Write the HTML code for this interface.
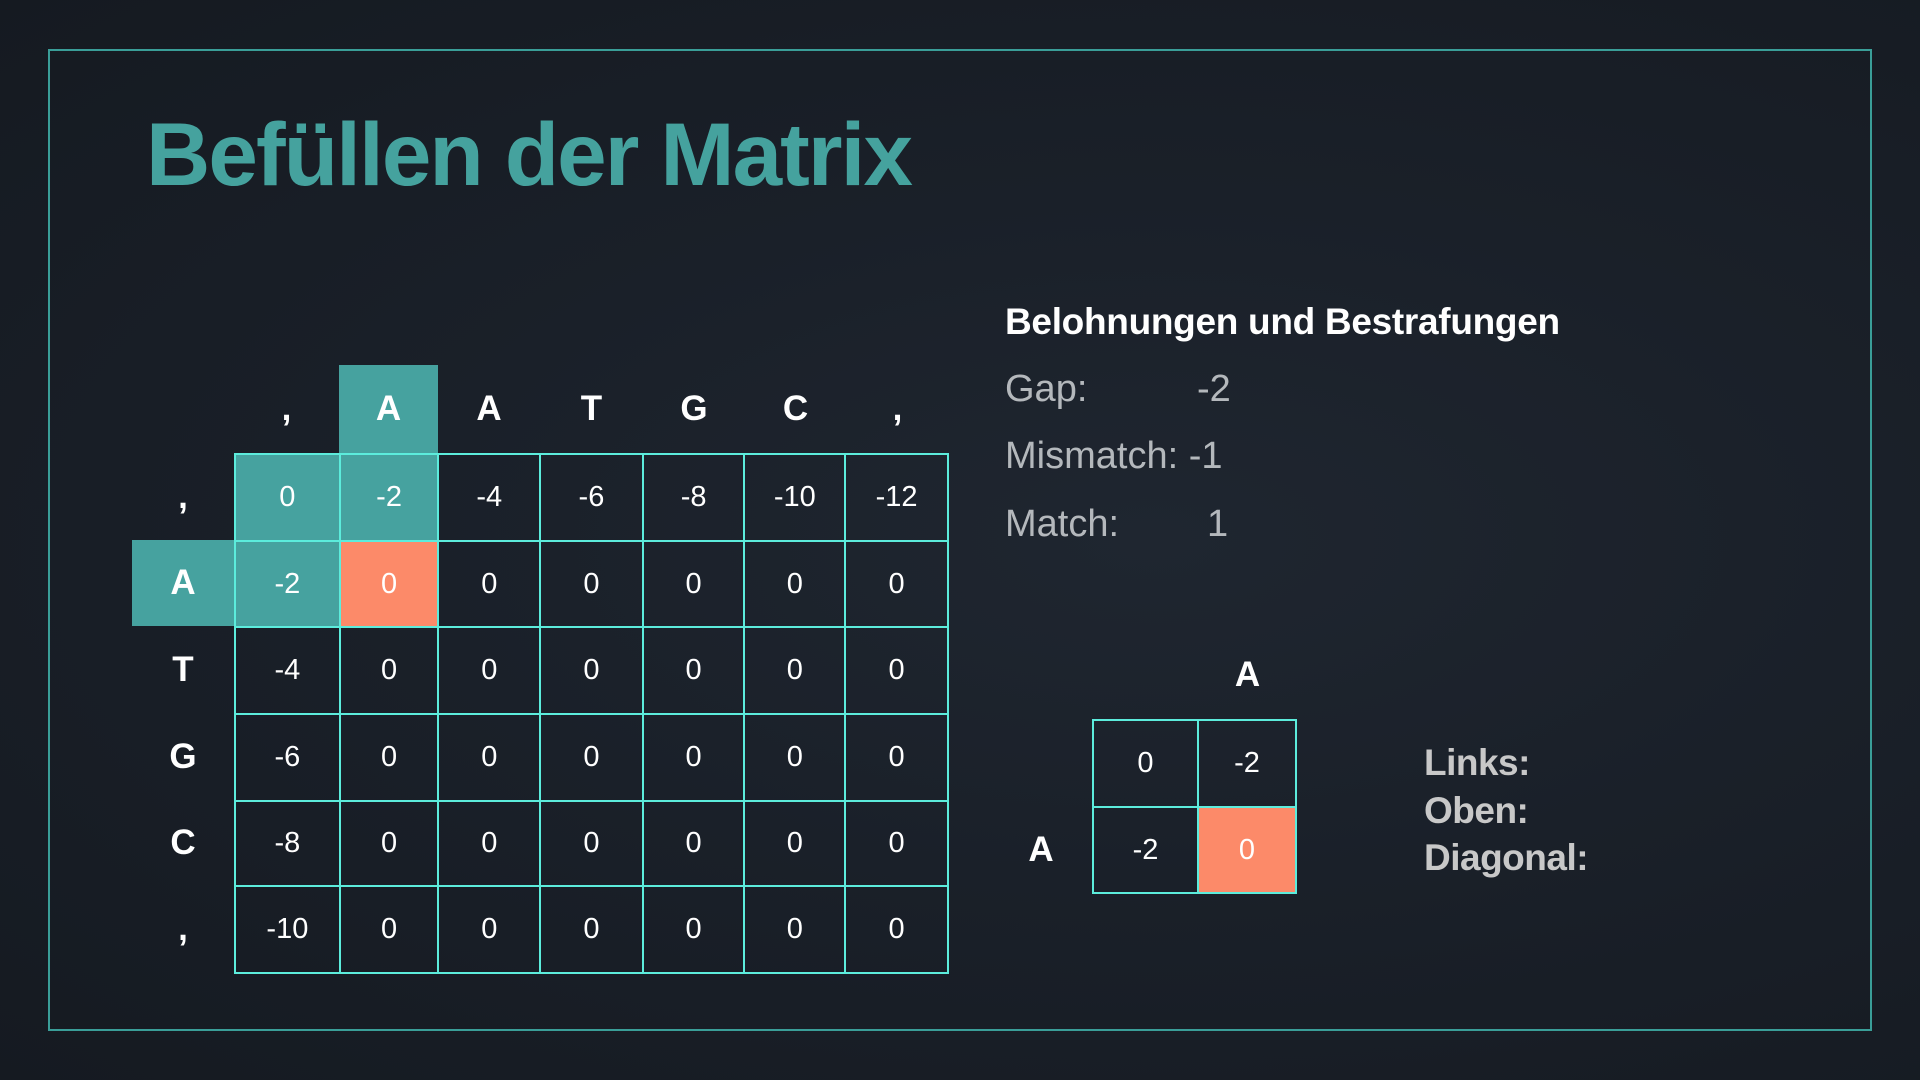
<!DOCTYPE html>
<html><head><meta charset="utf-8"><style>
*{margin:0;padding:0;box-sizing:border-box}
body{width:1920px;height:1080px;overflow:hidden;background:radial-gradient(ellipse at 60% 50%,#1f2630 0%,#1a2029 45%,#151a21 100%);font-family:"Liberation Sans",Roboto,sans-serif;color:#fff;position:relative}
.frame{position:absolute;left:48px;top:49px;width:1824px;height:982px;border:2px solid #3a9e98}
h1{position:absolute;left:146px;top:110px;font-size:89px;font-weight:bold;color:#45a29e;letter-spacing:-1.9px;line-height:1}
table{position:absolute;border-collapse:collapse}
td{border:2.5px solid #5cecdc;text-align:center;font-size:29px;color:#fff;padding:0}
.t{background:#46a29f}.o{background:#fc8a69}
.lab{position:absolute;display:flex;align-items:center;justify-content:center;font-weight:bold;font-size:35px;color:#fff}
.r{position:absolute;font-size:38px;color:#b4b8bc;font-weight:300}
.lk{position:absolute;left:1424px;font-size:37px;color:#c8c8c8;font-weight:bold;letter-spacing:-0.5px}
</style></head><body>
<div class="frame"></div>
<h1>Befüllen der Matrix</h1>

<div class="lab" style="left:234px;top:365px;width:105px;height:88px">,</div>
<div class="lab t" style="left:339px;top:365px;width:99px;height:88px">A</div>
<div class="lab" style="left:438px;top:365px;width:102px;height:88px">A</div>
<div class="lab" style="left:540px;top:365px;width:103px;height:88px">T</div>
<div class="lab" style="left:643px;top:365px;width:102px;height:88px">G</div>
<div class="lab" style="left:745px;top:365px;width:101px;height:88px">C</div>
<div class="lab" style="left:846px;top:365px;width:103px;height:88px">,</div>

<div class="lab" style="left:132px;top:453px;width:102px;height:87px">,</div>
<div class="lab t" style="left:132px;top:540px;width:102px;height:86px">A</div>
<div class="lab" style="left:132px;top:626px;width:102px;height:87px">T</div>
<div class="lab" style="left:132px;top:713px;width:102px;height:87px">G</div>
<div class="lab" style="left:132px;top:800px;width:102px;height:85px">C</div>
<div class="lab" style="left:132px;top:885px;width:102px;height:87px">,</div>

<table style="left:234px;top:453px;width:715px;height:519px">
<colgroup><col style="width:105px"><col style="width:99px"><col style="width:102px"><col style="width:103px"><col style="width:102px"><col style="width:101px"><col style="width:103px"></colgroup>
<tr style="height:87px"><td class="t">0</td><td class="t">-2</td><td>-4</td><td>-6</td><td>-8</td><td>-10</td><td>-12</td></tr>
<tr style="height:86px"><td class="t">-2</td><td class="o">0</td><td>0</td><td>0</td><td>0</td><td>0</td><td>0</td></tr>
<tr style="height:87px"><td>-4</td><td>0</td><td>0</td><td>0</td><td>0</td><td>0</td><td>0</td></tr>
<tr style="height:87px"><td>-6</td><td>0</td><td>0</td><td>0</td><td>0</td><td>0</td><td>0</td></tr>
<tr style="height:85px"><td>-8</td><td>0</td><td>0</td><td>0</td><td>0</td><td>0</td><td>0</td></tr>
<tr style="height:87px"><td>-10</td><td>0</td><td>0</td><td>0</td><td>0</td><td>0</td><td>0</td></tr>
</table>

<div style="position:absolute;left:1005px;top:301px;font-size:37px;font-weight:bold;color:#fff;letter-spacing:-0.3px">Belohnungen und Bestrafungen</div>
<div class="r" style="left:1005px;top:368px">Gap:</div><div class="r" style="left:1197px;top:368px">-2</div>
<div class="r" style="left:1005px;top:435px">Mismatch: -1</div>
<div class="r" style="left:1005px;top:503px">Match:</div><div class="r" style="left:1207px;top:503px">1</div>

<div class="lab" style="left:1198px;top:650px;width:99px;height:50px">A</div>
<div class="lab" style="left:1010px;top:825px;width:62px;height:50px">A</div>
<table style="left:1092px;top:719px;width:205px;height:173px">
<colgroup><col style="width:106px"><col style="width:99px"></colgroup>
<tr style="height:87px"><td>0</td><td>-2</td></tr>
<tr style="height:86px"><td>-2</td><td class="o">0</td></tr>
</table>

<div class="lk" style="top:742px">Links:</div>
<div class="lk" style="top:790px">Oben:</div>
<div class="lk" style="top:837px">Diagonal:</div>
</body></html>
